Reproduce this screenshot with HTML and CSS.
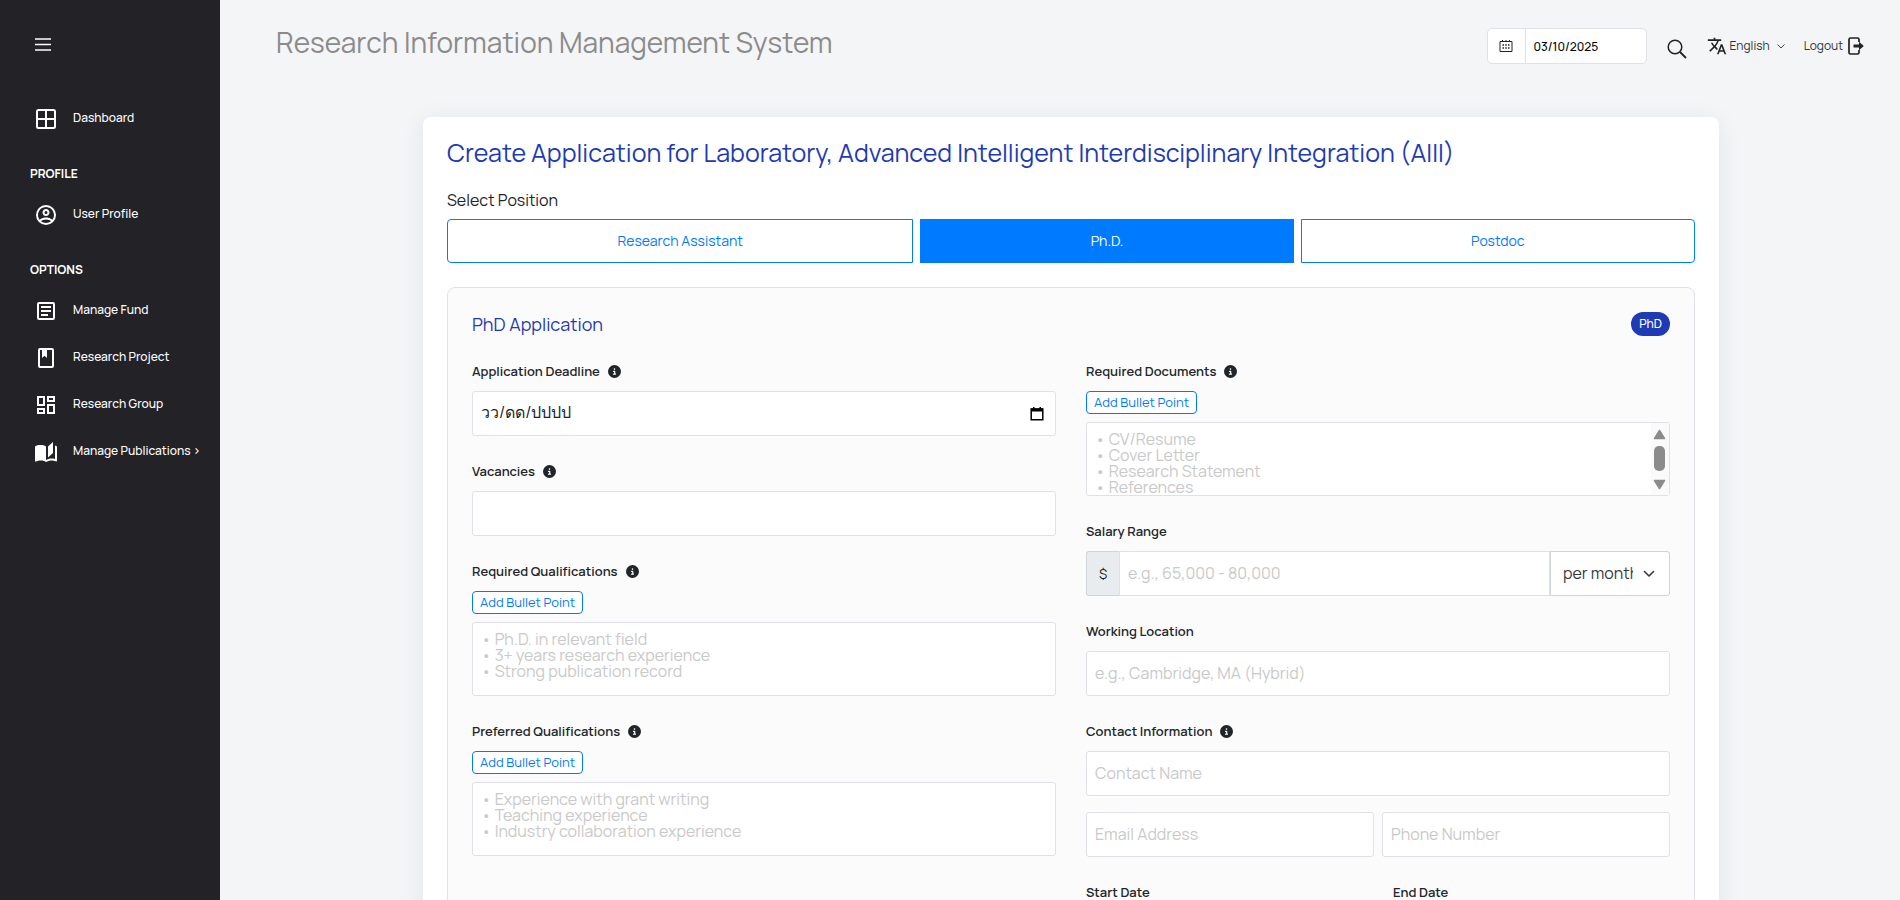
FILE: index.html
```html
<!DOCTYPE html>
<html lang="en">
<head>
<meta charset="utf-8">
<title>Research Information Management System</title>
<link rel="stylesheet" href="styles.css">
</head>
<body>
<svg class="defs" aria-hidden="true">
  <symbol id="info" viewBox="0 0 512 512"><path d="M256 512A256 256 0 1 0 256 0a256 256 0 1 0 0 512zM216 336h24V272H216c-13.300 0-24-10.700-24-24s10.700-24 24-24h48c13.300 0 24 10.700 24 24v88h8c13.300 0 24 10.700 24 24s-10.700 24-24 24H216c-13.300 0-24-10.700-24-24s10.700-24 24-24zm40-208a32 32 0 1 1 0 64 32 32 0 1 1 0-64z"/></symbol>
</svg>
<div class="app">
  <nav class="sidebar">
    <button class="menu-toggle" type="button" aria-label="Menu"><svg viewBox="0 0 16 13" width="16" height="13"><path d="M0 1h16M0 6.500h16M0 12h16" stroke="#fff" stroke-width="1.500"/></svg></button>
    <a class="nav-link" href="#"><svg viewBox="0 0 24 24"><rect x="3" y="3" width="18" height="18" rx="1.500" fill="none" stroke="#fff" stroke-width="2"/><path d="M12 3v18M3 12h18" stroke="#fff" stroke-width="2"/></svg>Dashboard</a>
    <h2 class="nav-heading">PROFILE</h2>
    <a class="nav-link" href="#"><svg viewBox="0 0 24 24"><path d="M12,2A10,10 0 0,0 2,12A10,10 0 0,0 12,22A10,10 0 0,0 22,12A10,10 0 0,0 12,2M7.070,18.280C7.500,17.380 10.120,16.500 12,16.500C13.880,16.500 16.500,17.380 16.930,18.280C15.570,19.360 13.860,20 12,20C10.140,20 8.430,19.360 7.070,18.280M18.360,16.830C16.930,15.090 13.460,14.500 12,14.500C10.540,14.500 7.070,15.090 5.640,16.830C4.620,15.500 4,13.820 4,12C4,7.590 7.590,4 12,4C16.410,4 20,7.590 20,12C20,13.820 19.380,15.500 18.360,16.830M12,6C10.060,6 8.500,7.560 8.500,9.500C8.500,11.440 10.060,13 12,13C13.940,13 15.500,11.440 15.500,9.500C15.500,7.560 13.940,6 12,6M12,11A1.500,1.500 0 0,1 10.500,9.500A1.500,1.500 0 0,1 12,8A1.500,1.500 0 0,1 13.500,9.500A1.500,1.500 0 0,1 12,11Z"/></svg>User Profile</a>
    <h2 class="nav-heading">OPTIONS</h2>
    <a class="nav-link" href="#"><svg viewBox="0 0 24 24"><rect x="4" y="4" width="16" height="16" rx="1" fill="none" stroke="#fff" stroke-width="2"/><path d="M7 8h10M7 12h10M7 16h7" stroke="#fff" stroke-width="2"/></svg>Manage Fund</a>
    <a class="nav-link" href="#"><svg viewBox="0 0 24 24"><rect x="5" y="3" width="14" height="18" rx="1" fill="none" stroke="#fff" stroke-width="2"/><path d="M8 4h5v8l-2.500-2.200L8 12z"/></svg>Research Project</a>
    <a class="nav-link" href="#"><svg viewBox="0 0 24 24"><path d="M19,5V7H15V5H19M9,5V11H5V5H9M19,13V19H15V13H19M9,17V19H5V17H9M21,3H13V9H21V3M11,3H3V13H11V3M21,11H13V21H21V11M11,15H3V21H11V15Z"/></svg>Research Group</a>
    <a class="nav-link" href="#"><svg viewBox="0 0 24 24"><path d="M19 2L14 6.500V17.500L19 13V2M6.500 5C4.550 5 2.450 5.400 1 6.500V21.160C1 21.410 1.250 21.660 1.500 21.660C1.600 21.660 1.650 21.590 1.750 21.590C3.100 20.940 5.050 20.500 6.500 20.500C8.450 20.500 10.550 20.900 12 22C13.350 21.150 15.800 20.500 17.500 20.500C19.150 20.500 20.850 20.810 22.250 21.560C22.350 21.610 22.400 21.590 22.500 21.590C22.750 21.590 23 21.340 23 21.090V6.500C22.400 6.050 21.750 5.750 21 5.500V19C19.900 18.650 18.700 18.500 17.500 18.500C15.800 18.500 13.350 19.150 12 20V6.500C10.550 5.400 8.450 5 6.500 5Z"/></svg>Manage Publications ›</a>
  </nav>

  <div class="main">
    <header class="topbar">
      <h1 class="brand">Research Information Management System</h1>
      <div class="tools">
        <div class="date-box">
          <label class="date-icon" for="today" aria-label="Date"><svg viewBox="0 0 14 14" width="14" height="14"><path d="M1 2.500h12v10H1zM3.500 1v2M7 1v2M10.500 1v2" fill="none" stroke="#222"/><path d="M3.500 6h1.500M6.300 6h1.500M9 6h1.500M3.500 9h1.500M6.300 9h1.500M9 9h1.500" stroke="#222" stroke-width="1.300"/></svg></label>
          <input id="today" class="date-value" type="text" value="03/10/2025">
        </div>
        <button class="icon-btn" type="button" aria-label="Search"><svg viewBox="0 0 20 20" width="20" height="20"><circle cx="8" cy="8" r="6.800" fill="none" stroke="#222" stroke-width="1.500"/><path d="M13 13l6 6" stroke="#222" stroke-width="1.800"/></svg></button>
        <button class="tool-btn lang" type="button"><svg viewBox="0 0 24 24" width="20" height="20"><path d="M12.870,15.070L10.330,12.560L10.360,12.530C12.100,10.590 13.340,8.360 14.070,6H17V4H10V2H8V4H1V6H12.170C11.500,7.920 10.440,9.750 9,11.350C8.070,10.320 7.300,9.190 6.690,8H4.690C5.420,9.630 6.420,11.170 7.670,12.560L2.580,17.580L4,19L9,14L12.110,17.110L12.870,15.070M18.500,10H16.500L12,22H14L15.120,19H19.870L21,22H23L18.500,10M15.880,17L17.500,12.670L19.120,17H15.880Z" fill="#222"/></svg>English<svg class="caret" viewBox="0 0 8 5" width="8" height="5"><path d="M.5.5L4 4 7.500.5" fill="none" stroke="#444"/></svg></button>
        <a class="tool-btn logout" href="#">Logout<svg viewBox="0 0 16 18" width="16" height="18"><path d="M11 5V2.500Q11 1 9.500 1h-7Q1 1 1 2.500v13Q1 17 2.500 17h7q1.500 0 1.500-1.500V13" fill="none" stroke="#222" stroke-width="1.700"/><path d="M5.500 7.500H11V4.800L15.800 9 11 13.200v-2.700H5.500z" fill="#222"/></svg></a>
      </div>
    </header>

    <div class="content">
    <main class="card">
      <h2 class="card-title">Create Application for Laboratory, Advanced Intelligent Interdisciplinary Integration (AIII)</h2>
      <div class="position-label" id="pos">Select Position</div>
      <div class="positions" role="group" aria-labelledby="pos">
        <button class="position" type="button">Research Assistant</button>
        <button class="position active" type="button">Ph.D.</button>
        <button class="position" type="button">Postdoc</button>
      </div>

      <form class="panel">
        <div class="panel-head"><h3 class="panel-title">PhD Application</h3><span class="badge">PhD</span></div>
        <div class="columns">
          <div class="column">
            <div class="field">
              <label class="label" for="deadline">Application Deadline<svg class="info"><use href="#info"/></svg></label>
              <div class="date-field">
                <input id="deadline" class="control thai" type="text" value="วว/ดด/ปปปป">
                <svg class="picker" viewBox="0 0 14 14" width="14" height="14"><path d="M1.200 2h11.600v10.800H1.200z" fill="none" stroke="#000" stroke-width="1.500"/><path d="M1 1.500h12v3H1zM3 0h1.500v2H3zM9.500 0H11v2H9.500z"/></svg>
              </div>
            </div>
            <div class="field">
              <label class="label" for="vac">Vacancies<svg class="info"><use href="#info"/></svg></label>
              <input id="vac" class="control" type="text">
            </div>
            <div class="field">
              <label class="label" for="rq">Required Qualifications<svg class="info"><use href="#info"/></svg></label>
              <button class="add" type="button">Add Bullet Point</button>
              <textarea id="rq" class="control area" placeholder="• Ph.D. in relevant field&#10;• 3+ years research experience&#10;• Strong publication record"></textarea>
            </div>
            <div class="field">
              <label class="label" for="pq">Preferred Qualifications<svg class="info"><use href="#info"/></svg></label>
              <button class="add" type="button">Add Bullet Point</button>
              <textarea id="pq" class="control area" placeholder="• Experience with grant writing&#10;• Teaching experience&#10;• Industry collaboration experience"></textarea>
            </div>
          </div>

          <div class="column">
            <div class="field">
              <label class="label" for="docs">Required Documents<svg class="info"><use href="#info"/></svg></label>
              <button class="add" type="button">Add Bullet Point</button>
              <div class="scroll-area">
                <textarea id="docs" class="control area" placeholder="• CV/Resume&#10;• Cover Letter&#10;• Research Statement&#10;• References"></textarea>
                <svg class="scrollbar" viewBox="0 0 18 72" width="18" height="72"><path d="M0 0h18v72H0z" fill="#fafafa"/><path d="M8.500 7.500L13.500 15.500h-10zM8.500 65.500L13.500 57.500h-10z" fill="#8b8b8b" stroke="#8b8b8b" stroke-width="1.500" stroke-linejoin="round"/><rect x="3" y="23" width="11" height="25" rx="5" fill="#8b8b8b"/></svg>
              </div>
            </div>
            <div class="field">
              <label class="label" for="salary">Salary Range</label>
              <div class="salary">
                <span class="prefix">$</span>
                <input id="salary" class="control amount" type="text" placeholder="e.g., 65,000 - 80,000">
                <div class="select-wrap">
                  <select class="control period" aria-label="Salary period"><option>per month</option></select>
                  <svg class="arrow" viewBox="0 0 12 8" width="12" height="8"><path d="M1.500 1.500L6 6l4.500-4.500" fill="none" stroke="#343a40" stroke-width="1.600" stroke-linecap="round" stroke-linejoin="round"/></svg>
                </div>
              </div>
            </div>
            <div class="field">
              <label class="label" for="loc">Working Location</label>
              <input id="loc" class="control" type="text" placeholder="e.g., Cambridge, MA (Hybrid)">
            </div>
            <div class="field">
              <label class="label" for="contact">Contact Information<svg class="info"><use href="#info"/></svg></label>
              <input id="contact" class="control" type="text" placeholder="Contact Name">
              <div class="pair">
                <input class="control" type="email" placeholder="Email Address" aria-label="Email Address">
                <input class="control" type="tel" placeholder="Phone Number" aria-label="Phone Number">
              </div>
            </div>
            <div class="dates">
              <div class="field"><label class="label" for="start">Start Date</label><input id="start" class="control" type="text"></div>
              <div class="field"><label class="label" for="end">End Date</label><input id="end" class="control" type="text"></div>
            </div>
          </div>
        </div>
      </form>
    </main>
    </div>
  </div>
</div>
</body>
</html>
```

FILE: styles.css
```css
* { box-sizing: border-box; }
body { margin: 0; background: #f4f5f7; color: #212529; font-family: Manrope, Inter, sans-serif; font-size: 16px; }
button, input, select, textarea { font-family: inherit; }
h1, h2, h3 { margin: 0; font-weight: 400; }
a { color: inherit; text-decoration: none; }
.defs { display: none; }
.app { display: flex; height: 100vh; }

.sidebar { flex: none; width: 220px; padding: 37px 0 0; background: #222227; color: #fff; overflow: hidden; }
.menu-toggle { display: block; margin: 0 0 42px 35px; padding: 0; border: 0; background: none; height: 15px; line-height: 0; }
.nav-link { display: flex; align-items: center; gap: 15px; height: 47px; padding-left: 34px; font-size: 12px; font-weight: 500; white-space: nowrap; }
.nav-link svg { width: 24px; height: 24px; margin-top: 2px; fill: #fff; }
.nav-heading { margin: 22px 0 6px; padding-left: 30px; font-size: 12px; line-height: 20px; font-weight: 700; }
.nav-link + .nav-heading { margin-top: 23px; }

.main { flex: 1; min-width: 0; overflow-y: auto; scrollbar-width: none; }
.topbar { display: flex; justify-content: space-between; align-items: flex-start; padding: 22px 36px 0 56px; height: 94px; }
.brand { font-size: 28px; line-height: 40px; font-weight: 400; color: #8b8b8b; }
.tools { display: flex; align-items: center; padding-top: 6px; color: #333; }
.date-box { display: flex; width: 160px; height: 36px; background: #fff; border: 1px solid #dee2e6; border-radius: 5px; }
.date-icon { display: flex; align-items: center; justify-content: center; width: 38px; border-right: 1px solid #dee2e6; }
.date-value { flex: 1; min-width: 0; padding: 0 8px; border: 0; background: none; font-size: 12px; font-weight: 500; color: #000; }
.icon-btn { margin: 6px 20px 0; padding: 0; border: 0; background: none; line-height: 0; }
.tool-btn { display: flex; align-items: center; gap: 3px; padding: 0; border: 0; background: none; color: inherit; font-size: 12px; line-height: 20px; }
.caret { margin-left: 4px; }
.logout { margin-left: 19px; gap: 5px; }

.content { padding: 23px 181px 40px 203px; }
.card { padding: 24px; background: #fff; border-radius: 8px; box-shadow: 0 4px 24px rgba(34, 34, 80, .08); }
.card-title { font-size: 25px; line-height: 24px; color: #1e3ab4; }
.position-label { margin-top: 24px; line-height: 22px; }
.positions { display: flex; gap: 7px; margin-top: 8px; }
.position { flex: 1 1 auto; height: 44px; padding: 0 6px 2px; border: 1px solid #007bff; background: #fff; color: #007bff; font-size: 14px; }
.position:first-child { border-radius: 4px 0 0 4px; }
.position:last-child { border-radius: 0 4px 4px 0; }
.position.active { background: #007bff; color: #fff; }

.panel { margin-top: 24px; padding: 24px; border: 1px solid #dee2e6; border-radius: 8px; background: #fbfbfb; }
.panel-head { display: flex; justify-content: space-between; align-items: center; height: 24px; margin-bottom: 25px; }
.panel-title { font-size: 18px; color: #1e3ab4; }
.badge { padding: 0 8px; border-radius: 12px; background: #1e3ab4; color: #fff; font-size: 12px; line-height: 24px; font-weight: 500; }
.columns { display: grid; grid-template-columns: 1fr 1fr; gap: 30px; }
.field { margin-bottom: 25px; }
.label { display: flex; align-items: center; gap: 8px; height: 20px; margin-bottom: 10px; font-size: 13px; font-weight: 600; }
.info { width: 13px; height: 13px; fill: #212529; }
.control { display: block; width: 100%; height: 45px; padding: 0 8px 2px; border: 1px solid #dee2e6; border-radius: 3px; background: #fff; color: #343a40; font-size: 16px; }
.control::placeholder { color: #c9c9c9; opacity: 1; }
.area { height: 74px; padding: 8px; line-height: 16px; resize: none; overflow: hidden; }
.add { display: block; height: 23px; margin-bottom: 8px; padding: 0 7px 1px; border: 1px solid #007bff; border-radius: 4px; background: #fff; color: #007bff; font-size: 13px; }
.date-field, .scroll-area, .select-wrap { position: relative; }
.thai { color: #212529; }
.picker { position: absolute; right: 12px; top: 16px; }
.scrollbar { position: absolute; right: 1px; top: 1px; }
.salary { display: flex; }
.prefix { display: flex; align-items: center; justify-content: center; width: 33px; background: #e9ecef; border: 1px solid #ced4da; border-right: 0; border-radius: 3px 0 0 3px; font-size: 14px; }
.amount { flex: 1; min-width: 0; border-radius: 0; }
.select-wrap { width: 120px; }
.period { appearance: none; padding: 0 36px 2px 12px; border-color: #ced4da; border-radius: 0 3px 3px 0; }
.arrow { position: absolute; right: 15px; top: 19px; }
.pair { display: flex; gap: 8px; margin-top: 16px; }
.dates { display: grid; grid-template-columns: 1fr 1fr; gap: 30px; }
```
